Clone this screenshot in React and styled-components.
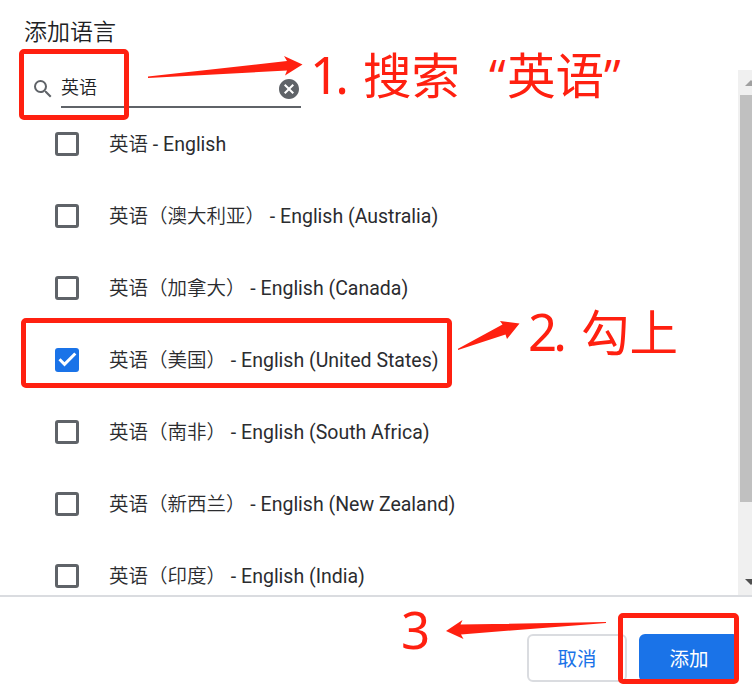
import React from "react";
import styled, { createGlobalStyle, css } from "styled-components";

const RED = "#ff2010";

const GlobalStyle = createGlobalStyle`
  * { box-sizing: border-box; }
  body {
    margin: 0;
    overflow: hidden;
    background: #fff;
    color: #202124;
    font-family: Roboto, "Noto Sans CJK SC", sans-serif;
  }
`;

const Dialog = styled.main`
  position: relative;
  display: flex;
  flex-direction: column;
  width: 752px;
  height: 697px;
  overflow: hidden;
`;

const Header = styled.header`
  height: 70px;
  padding: 13px 24px 0;
`;

const Title = styled.h1`
  margin: 0;
  font-size: 23px;
  font-family: "Noto Sans CJK SC", sans-serif;
  font-weight: 350;
  line-height: 34px;
`;

const Body = styled.div`
  display: flex;
  height: 525px;
`;

const Content = styled.div`
  flex: 1;
  overflow: hidden;
`;

const Search = styled.div`
  display: flex;
  align-items: center;
  height: 38px;
  padding-left: 31px;
`;

const SearchIcon = styled.svg`
  width: 24px;
  height: 24px;
  margin-right: 6px;
  fill: #5f6368;
`;

const Field = styled.div`
  display: flex;
  align-items: center;
  justify-content: space-between;
  width: 240px;
  height: 38px;
  border-bottom: 2px solid #5f6368;
  font-family: "Noto Sans CJK SC", sans-serif;
  font-size: 18px;
  font-weight: 350;
  line-height: 32px;
`;

const Query = styled.span`
  padding-bottom: 4px;
`;

const ClearIcon = styled.svg`
  width: 24px;
  height: 24px;
  margin-top: 2px;
  fill: #5f6368;
`;

const List = styled.ul`
  margin: 0;
  padding: 0 0 0 55px;
  list-style: none;
`;

const Row = styled.li`
  display: flex;
  align-items: center;
  gap: 30px;
  height: 72px;
  font-size: 19.5px;
  white-space: pre;
`;

const Chinese = styled.span`
  font-family: "Noto Sans CJK SC", sans-serif;
  font-weight: 350;
`;

const Label = styled.span`
  color: #2b2c2f;
  line-height: 28px;
`;

const Box = styled.span`
  display: grid;
  place-items: center;
  width: 24px;
  height: 24px;
  border: 3px solid #5f6368;
  border-radius: 3px;
  ${(p) => p.$checked && css`
    border: 0;
    background: #1a73e8;
  `}
`;

const CheckMark = styled.svg`
  width: 24px;
  height: 24px;
  fill: none;
  stroke: #fff;
  stroke-width: 3;
`;

const Scrollbar = styled.div`
  display: flex;
  flex-direction: column;
  justify-content: space-between;
  width: 14px;
  background: #f0f0f0;
`;

const Thumb = styled.div`
  flex: 1;
  margin: 0 0 68px 2px;
  background: #c0c0c0;
`;

const ScrollArrow = styled.svg`
  width: 14px;
  height: 25px;
  fill: ${(p) => p.$color};
`;

const Footer = styled.footer`
  display: flex;
  justify-content: flex-end;
  gap: 12px;
  height: 102px;
  padding: 37px 13px 0 0;
  border-top: 2px solid #dadce0;
`;

const Button = styled.button`
  width: 100px;
  height: 48px;
  padding: 0;
  border: 2px solid ${(p) => (p.$primary ? "#1a73e8" : "#dadce0")};
  border-radius: 6px;
  background: ${(p) => (p.$primary ? "#1a73e8" : "#fff")};
  color: ${(p) => (p.$primary ? "#fff" : "#1a73e8")};
  font: 400 19.5px/44px "Noto Sans CJK SC", sans-serif;
`;

const Highlight = styled.div`
  position: absolute;
  left: ${(p) => p.$x}px;
  top: ${(p) => p.$y}px;
  width: ${(p) => p.$w}px;
  height: ${(p) => p.$h}px;
  border: 5px solid ${RED};
  border-radius: 5px;
`;

const Arrows = styled.svg`
  position: absolute;
  inset: 0;
  width: 752px;
  height: 697px;
  fill: ${RED};
  pointer-events: none;
`;

const Note = styled.div`
  position: absolute;
  left: ${(p) => p.$x}px;
  top: ${(p) => p.$y}px;
  display: flex;
  align-items: baseline;
  color: ${RED};
  font: 400 48.5px/70px "Noto Sans CJK SC", sans-serif;
  white-space: pre;
`;

const Numeral = styled.span`
  width: ${(p) => p.$w}px;
  font-family: "Noto Sans", sans-serif;
  font-size: 51px;
  letter-spacing: -4px;
`;

const Quote = styled.span`
  width: ${(p) => p.$w}px;
  padding-left: ${(p) => p.$indent || 0}px;
  font-family: "Open Sans", sans-serif;
  font-size: 48px;
`;

const languages = [
  ["英语", " - English"],
  ["英语（澳大利亚）", " - English (Australia)"],
  ["英语（加拿大）", " - English (Canada)"],
  ["英语（美国）", " - English (United States)", true],
  ["英语（南非）", " - English (South Africa)"],
  ["英语（新西兰）", " - English (New Zealand)"],
  ["英语（印度）", " - English (India)"],
];

function Language({ name, english, checked }) {
  return (
    <Row>
      <Box $checked={checked}>
        {checked && (
          <CheckMark viewBox="0 0 24 24">
            <path d="M4.5 11.3l5 5L20.3 5.5" />
          </CheckMark>
        )}
      </Box>
      <Label><Chinese>{name}</Chinese>{english}</Label>
    </Row>
  );
}

export default function App() {
  return (
    <>
      <GlobalStyle />
      <Dialog>
        <Header><Title>添加语言</Title></Header>
        <Body>
          <Content>
            <Search>
              <SearchIcon viewBox="0 0 24 24">
                <path d="M15.5 14h-.79l-.28-.27A6.47 6.47 0 0 0 16 9.5 6.5 6.5 0 1 0 9.5 16c1.61 0 3.09-.59 4.23-1.57l.27.28v.79l5 4.99L20.49 19l-4.99-5zm-6 0C7.01 14 5 11.99 5 9.5S7.01 5 9.5 5 14 7.01 14 9.5 11.99 14 9.5 14z" />
              </SearchIcon>
              <Field>
                <Query>英语</Query>
                <ClearIcon viewBox="0 0 24 24">
                  <path d="M12 2C6.47 2 2 6.47 2 12s4.47 10 10 10 10-4.47 10-10S17.53 2 12 2zm5 13.59L15.59 17 12 13.41 8.41 17 7 15.59 10.59 12 7 8.41 8.41 7 12 10.59 15.59 7 17 8.41 13.41 12 17 15.59z" />
                </ClearIcon>
              </Field>
            </Search>
            <List>
              {languages.map(([name, english, checked]) => (
                <Language key={name} name={name} english={english} checked={checked} />
              ))}
            </List>
          </Content>
          <Scrollbar>
            <ScrollArrow $color="#a0a0a0" viewBox="0 0 14 25"><path d="M7 16L13 10L19 16z" /></ScrollArrow>
            <Thumb />
            <ScrollArrow $color="#505050" viewBox="0 0 14 25"><path d="M7 9L13 15L19 9z" /></ScrollArrow>
          </Scrollbar>
        </Body>
        <Footer>
          <Button>取消</Button>
          <Button $primary>添加</Button>
        </Footer>

        <Highlight $x={19} $y={49} $w={110} $h={71} />
        <Highlight $x={21} $y={318} $w={431} $h={70} />
        <Highlight $x={618} $y={613} $w={121} $h={71} />
        <Arrows viewBox="0 0 752 697">
          <path d="M148 76.6L287 61L284 56L302.5 64.5L285 75.5L287 70.5L148 78z" />
          <path d="M458 348.7L502.500 324.500L500 321L519.500 323.500L507 339L505.500 334.500L458 350z" />
          <path d="M606 622L460.500 624.500L462.500 620L446 631L463.500 639L461 634.500L606 623z" />
        </Arrows>
        <Note $x={310} $y={38}>
          <Numeral $w={53}>1.</Numeral>
          <span>搜索</span>
          <Quote $w={47} $indent={29}>“</Quote>
          <span>英语</span>
          <Quote $w={20}>”</Quote>
        </Note>
        <Note $x={528} $y={295}>
          <Numeral $w={53}>2.</Numeral>
          <span>勾上</span>
        </Note>
        <Note $x={401} $y={594}><Numeral $w={30}>3</Numeral></Note>
      </Dialog>
    </>
  );
}
